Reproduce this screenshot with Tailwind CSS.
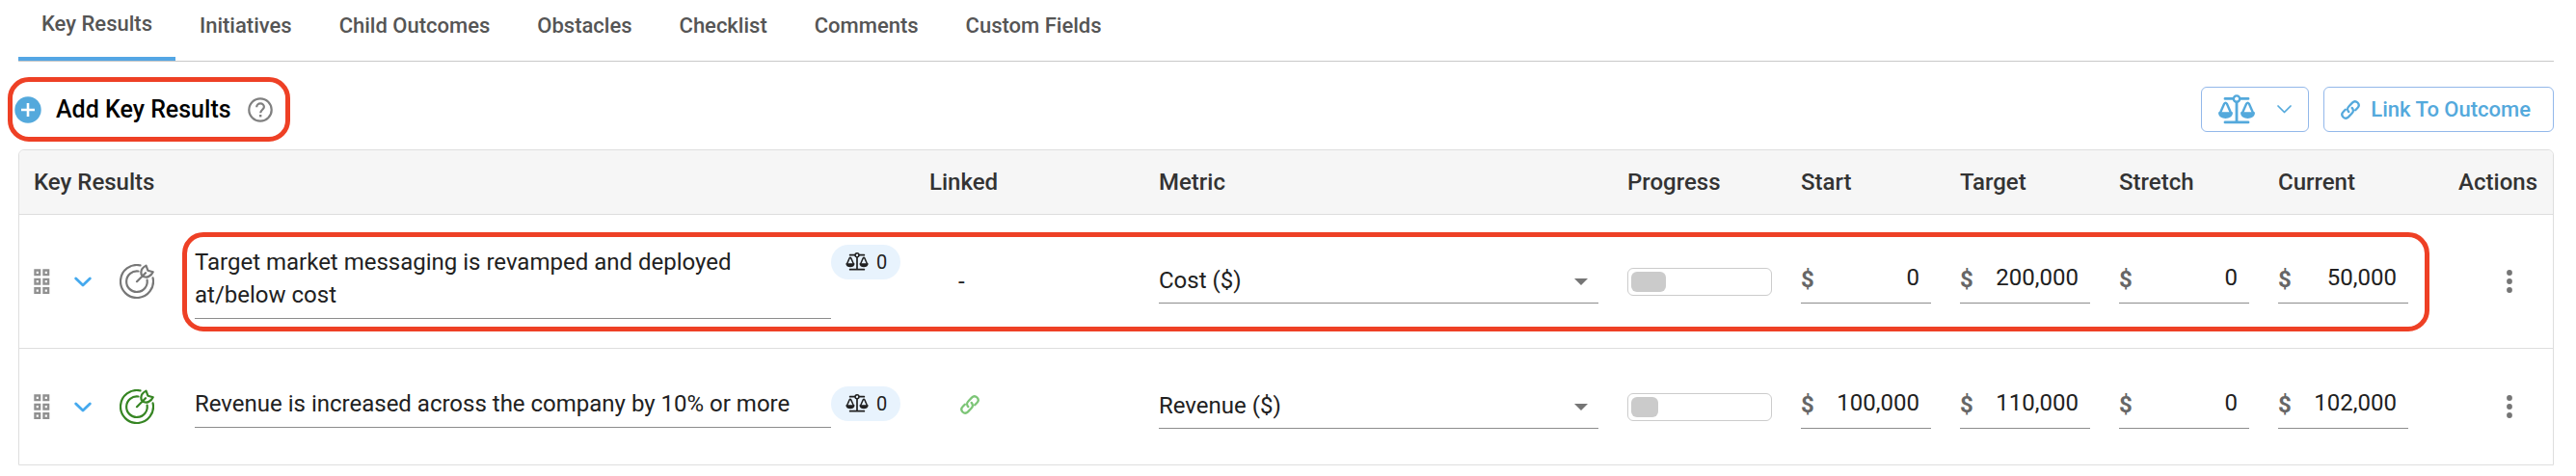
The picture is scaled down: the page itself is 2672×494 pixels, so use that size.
<!DOCTYPE html>
<html lang="en">
<head>
    <meta charset="UTF-8">
    <meta name="viewport" content="width=device-width, initial-scale=1.0">
    <title>Key Results</title>
    <script src="https://cdn.jsdelivr.net/npm/@tailwindcss/browser@4"></script>
</head>
<body class="bg-white font-['Roboto',sans-serif] text-[#212121]">
    <!-- Icons -->
    <svg class="hidden" aria-hidden="true">
        <symbol id="icon-scale" viewBox="0 0 38 31">
            <g fill="none" stroke="currentColor" stroke-linecap="round" stroke-linejoin="round">
                <path stroke-width="2.8" d="M7 4.4h8M23 4.4h8M19 8.5v20M7 28.9h24"/>
                <circle cx="19" cy="4.6" r="3.2" stroke-width="2.4"/>
                <path stroke-width="2.4" d="M1.8 19.5 6.2 9.6Q7.5 7.6 8.8 9.6L13.2 19.5M24.8 19.5 29.2 9.6Q30.5 7.6 31.8 9.6L36.2 19.5"/>
            </g>
            <path fill="currentColor" d="M.3 18.3h14.4c1 4-3 6.6-7.2 6.6S-.7 22.3.3 18.3zM23.3 18.3h14.4c1 4-3 6.6-7.2 6.6s-8.2-2.6-7.2-6.6z"/>
        </symbol>
        <symbol id="icon-link" viewBox="0 0 20 20">
            <g fill="none" stroke="currentColor" stroke-width="2.3" stroke-linecap="round">
                <path d="M8.3 12.1C6.7 10.5 6.7 8.1 8.3 6.5L12 2.6C13.6 1 15.9 1 17.5 2.5C19 4.1 19 6.4 17.4 8L15.2 10.3"/>
                <path d="M11.7 7.9C13.3 9.5 13.3 11.9 11.7 13.5L8 17.4C6.4 19 4.1 19 2.5 17.5C1 15.9 1 13.6 2.6 12L4.8 9.7"/>
            </g>
        </symbol>
        <symbol id="icon-target" viewBox="0 0 36 36">
            <g fill="none" stroke="currentColor" stroke-width="2.2" stroke-linecap="round" stroke-linejoin="round">
                <path d="M21.5 1.4A17 17 0 1 0 34.6 14.4"/>
                <path d="M19.5 7.5A10.8 10.8 0 1 0 28.6 16.5"/>
                <path d="M18 18.2 27 9.2M23.4 12.6C21.4 8.5 22.5 4.3 27.5 1.6L29.4 6.7 34.7 8.3C32.5 13.3 28 14.8 23.4 12.6z"/>
            </g>
        </symbol>
        <symbol id="icon-drag" viewBox="0 0 17 27">
            <g fill="none" stroke="currentColor" stroke-width="2.4">
                <path d="M1.5 1.5h4.6v4.6H1.5zM10.5 1.5h4.6v4.6h-4.6zM1.5 10.9h4.6v4.6H1.5zM10.5 10.9h4.6v4.6h-4.6zM1.5 20.3h4.6v4.6H1.5zM10.5 20.3h4.6v4.6h-4.6z"/>
            </g>
        </symbol>
        <symbol id="icon-chevron" viewBox="0 0 18 11">
            <path fill="none" stroke="currentColor" stroke-width="2.8" stroke-linecap="round" stroke-linejoin="round" d="M1.7 1.9 9 9l7.3-7.1"/>
        </symbol>
        <symbol id="icon-caret" viewBox="0 0 14 7">
            <path fill="currentColor" d="M0 0h14L7 7z"/>
        </symbol>
        <symbol id="icon-dots" viewBox="0 0 6 24">
            <g fill="currentColor"><circle cx="3" cy="3" r="2.9"/><circle cx="3" cy="12" r="2.9"/><circle cx="3" cy="21" r="2.9"/></g>
        </symbol>
    </svg>

    <!-- Tabs -->
    <nav class="ml-[19px] mr-[23px] flex gap-px border-b border-[#c8c8c8] text-[22px] leading-6 font-medium text-[#555]">
        <a href="#" aria-current="page" class="flex h-[63px] items-center border-b-4 border-[#54a6e4] px-6 pb-[9px]">Key Results</a>
        <a href="#" class="flex h-[63px] items-center px-6 pb-[9px]">Initiatives</a>
        <a href="#" class="flex h-[63px] items-center px-6 pb-[9px]">Child Outcomes</a>
        <a href="#" class="flex h-[63px] items-center px-6 pb-[9px]">Obstacles</a>
        <a href="#" class="flex h-[63px] items-center px-6 pb-[9px]">Checklist</a>
        <a href="#" class="flex h-[63px] items-center px-6 pb-[9px]">Comments</a>
        <a href="#" class="flex h-[63px] items-center px-6 pb-[9px]">Custom Fields</a>
    </nav>

    <main>
        <!-- Toolbar -->
        <div class="mt-4 mb-2 ml-2 mr-[23px] flex items-center justify-between">
            <div class="flex h-[67px] items-center rounded-[22px] border-5 border-[#ee4025] pl-[2px] pr-[13px]">
                <button type="button" class="flex items-center gap-[15px] text-[25px] leading-8 font-medium text-black">
                    <svg class="size-7" viewBox="0 0 28 28" aria-hidden="true">
                        <circle cx="14" cy="14" r="13.7" fill="#54a9dc"/>
                        <path d="M14 7v14M7 14h14" stroke="#fff" stroke-width="2.6"/>
                    </svg>
                    Add Key Results
                </button>
                <button type="button" aria-label="Help" class="ml-[17px] text-[#808080]">
                    <svg class="size-[26px]" viewBox="0 0 26 26" fill="none" stroke="currentColor" stroke-width="2.2">
                        <circle cx="13" cy="13" r="11.7"/>
                        <path d="M9.2 10.2c0-2.2 1.7-3.8 3.9-3.8s3.8 1.6 3.8 3.6c0 2.6-3.7 3-3.7 6.3"/>
                        <path d="M12 18h2.4v2.4H12z" fill="currentColor" stroke="none"/>
                    </svg>
                </button>
            </div>
            <div class="flex gap-[15px] text-[#54a9dc]">
                <button type="button" aria-label="Weights" class="flex h-[47px] items-center gap-[23px] rounded-md border border-[#93b8ea] px-[17px]">
                    <svg class="h-[31px] w-[38px]"><use href="#icon-scale"/></svg>
                    <svg class="h-[9px] w-[15px]" viewBox="0 0 15 9" fill="none" stroke="currentColor" stroke-width="1.7" stroke-linecap="round" stroke-linejoin="round"><path d="M1 1l6.5 6.5L14 1"/></svg>
                </button>
                <button type="button" class="flex h-[47px] items-center gap-[11px] rounded-md border border-[#93b8ea] pl-[17px] pr-[23px] text-[22px] leading-6 font-medium">
                    <svg class="size-5"><use href="#icon-link"/></svg>
                    Link To Outcome
                </button>
            </div>
        </div>

        <!-- Key results table -->
        <div class="relative ml-[19px] mr-[23px] rounded-t-md border border-[#dedede]">
            <table class="w-full table-fixed border-separate border-spacing-0 text-[24px] leading-[34px]">
                <thead class="text-left text-[#333]">
                    <tr class="h-[67px]">
                        <th scope="col" class="rounded-tl-md border-b border-[#dedede] bg-[#f6f6f6] px-[15px] font-medium">Key Results</th>
                        <th scope="col" class="w-[238px] border-b border-[#dedede] bg-[#f6f6f6] px-[15px] font-medium">Linked</th>
                        <th scope="col" class="w-[486px] border-b border-[#dedede] bg-[#f6f6f6] px-[15px] font-medium">Metric</th>
                        <th scope="col" class="w-[180px] border-b border-[#dedede] bg-[#f6f6f6] px-[15px] font-medium">Progress</th>
                        <th scope="col" class="w-[165px] border-b border-[#dedede] bg-[#f6f6f6] px-[15px] font-medium">Start</th>
                        <th scope="col" class="w-[165px] border-b border-[#dedede] bg-[#f6f6f6] px-[15px] font-medium">Target</th>
                        <th scope="col" class="w-[165px] border-b border-[#dedede] bg-[#f6f6f6] px-[15px] font-medium">Stretch</th>
                        <th scope="col" class="w-[165px] border-b border-[#dedede] bg-[#f6f6f6] px-[15px] font-medium">Current</th>
                        <th scope="col" class="w-[135px] rounded-tr-md border-b border-[#dedede] bg-[#f6f6f6] px-4 text-right font-medium">Actions</th>
                    </tr>
                </thead>
                <tbody>
                    <tr class="h-[139px]">
                        <td class="border-b border-[#dedede] px-[15px]">
                            <div class="flex items-center">
                                <button type="button" aria-label="Reorder" class="text-[#909090]"><svg class="h-[27px] w-[17px]"><use href="#icon-drag"/></svg></button>
                                <button type="button" aria-label="Expand" class="ml-[25px] text-[#45a9ee]"><svg class="h-[11px] w-[18px]"><use href="#icon-chevron"/></svg></button>
                                <svg class="ml-[29px] size-9 shrink-0 text-[#777]"><use href="#icon-target"/></svg>
                                <div class="ml-[42px] flex flex-1 items-start">
                                    <textarea aria-label="Key result" rows="2" class="block flex-1 resize-none overflow-hidden border-b border-[#8c8c8c] pt-px pb-[7px]">Target market messaging is revamped and deployed
at/below cost</textarea>
                                    <button type="button" class="flex h-9 w-[72px] items-center gap-2 rounded-full bg-[#e8f3fd] pl-[15px] text-[20px]">
                                        <svg class="h-[19px] w-6"><use href="#icon-scale"/></svg>0
                                    </button>
                                </div>
                            </div>
                        </td>
                        <td class="border-b border-[#dedede] pl-[45px]">-</td>
                        <td class="border-b border-[#dedede] px-[15px]">
                            <div class="relative">
                                <select aria-label="Metric" class="block h-[45px] w-full appearance-none border-b border-[#8c8c8c] pb-[2px]">
                                    <option>Cost ($)</option>
                                    <option>Revenue ($)</option>
                                </select>
                                <svg class="pointer-events-none absolute right-[11px] top-[19px] h-[7px] w-[14px] text-[#757575]"><use href="#icon-caret"/></svg>
                            </div>
                        </td>
                        <td class="border-b border-[#dedede] px-[15px]">
                            <div class="h-[29px] rounded-md border border-[#ccc] p-[3px]">
                                <div class="h-full rounded-md bg-[#cbcbcb]" style="width: 25%"></div>
                            </div>
                        </td>
                        <td class="border-b border-[#dedede] px-[15px]">
                            <label class="flex items-center border-b border-[#8c8c8c] pb-[7px] pr-3"><span class="pt-1 font-bold text-[#666]">$</span><input type="text" aria-label="Start" value="0" class="w-full min-w-0 text-right"></label>
                        </td>
                        <td class="border-b border-[#dedede] px-[15px]">
                            <label class="flex items-center border-b border-[#8c8c8c] pb-[7px] pr-3"><span class="pt-1 font-bold text-[#666]">$</span><input type="text" aria-label="Target" value="200,000" class="w-full min-w-0 text-right"></label>
                        </td>
                        <td class="border-b border-[#dedede] px-[15px]">
                            <label class="flex items-center border-b border-[#8c8c8c] pb-[7px] pr-3"><span class="pt-1 font-bold text-[#666]">$</span><input type="text" aria-label="Stretch" value="0" class="w-full min-w-0 text-right"></label>
                        </td>
                        <td class="border-b border-[#dedede] px-[15px]">
                            <label class="flex items-center border-b border-[#8c8c8c] pb-[7px] pr-3"><span class="pt-1 font-bold text-[#666]">$</span><input type="text" aria-label="Current" value="50,000" class="w-full min-w-0 text-right"></label>
                        </td>
                        <td class="border-b border-[#dedede] pr-8">
                            <button type="button" aria-label="More actions" class="ml-auto block px-[10px] text-[#757575]"><svg class="h-6 w-[6px]"><use href="#icon-dots"/></svg></button>
                        </td>
                    </tr>
                    <tr class="h-[120px]">
                        <td class="px-[15px]">
                            <div class="flex items-center">
                                <button type="button" aria-label="Reorder" class="text-[#909090]"><svg class="h-[27px] w-[17px]"><use href="#icon-drag"/></svg></button>
                                <button type="button" aria-label="Expand" class="ml-[25px] text-[#45a9ee]"><svg class="h-[11px] w-[18px]"><use href="#icon-chevron"/></svg></button>
                                <svg class="ml-[29px] size-9 shrink-0 text-[#368523]"><use href="#icon-target"/></svg>
                                <div class="ml-[42px] flex flex-1 items-start">
                                    <textarea aria-label="Key result" rows="1" class="block flex-1 resize-none overflow-hidden border-b border-[#8c8c8c] pt-px pb-[7px]">Revenue is increased across the company by 10% or more</textarea>
                                    <button type="button" class="flex h-9 w-[72px] items-center gap-2 rounded-full bg-[#e8f3fd] pl-[15px] text-[20px]">
                                        <svg class="h-[19px] w-6"><use href="#icon-scale"/></svg>0
                                    </button>
                                </div>
                            </div>
                        </td>
                        <td class="pl-[47px]">
                            <a href="#" aria-label="Linked outcome" class="block w-5 pb-1 text-[#7cc576]"><svg class="size-5"><use href="#icon-link"/></svg></a>
                        </td>
                        <td class="px-[15px]">
                            <div class="relative">
                                <select aria-label="Metric" class="block h-[45px] w-full appearance-none border-b border-[#8c8c8c] pb-[2px]">
                                    <option>Revenue ($)</option>
                                    <option>Cost ($)</option>
                                </select>
                                <svg class="pointer-events-none absolute right-[11px] top-[19px] h-[7px] w-[14px] text-[#757575]"><use href="#icon-caret"/></svg>
                            </div>
                        </td>
                        <td class="px-[15px]">
                            <div class="h-[29px] rounded-md border border-[#ccc] p-[3px]">
                                <div class="h-full rounded-md bg-[#cbcbcb]" style="width: 20%"></div>
                            </div>
                        </td>
                        <td class="px-[15px]">
                            <label class="flex items-center border-b border-[#8c8c8c] pb-[7px] pr-3"><span class="pt-1 font-bold text-[#666]">$</span><input type="text" aria-label="Start" value="100,000" class="w-full min-w-0 text-right"></label>
                        </td>
                        <td class="px-[15px]">
                            <label class="flex items-center border-b border-[#8c8c8c] pb-[7px] pr-3"><span class="pt-1 font-bold text-[#666]">$</span><input type="text" aria-label="Target" value="110,000" class="w-full min-w-0 text-right"></label>
                        </td>
                        <td class="px-[15px]">
                            <label class="flex items-center border-b border-[#8c8c8c] pb-[7px] pr-3"><span class="pt-1 font-bold text-[#666]">$</span><input type="text" aria-label="Stretch" value="0" class="w-full min-w-0 text-right"></label>
                        </td>
                        <td class="px-[15px]">
                            <label class="flex items-center border-b border-[#8c8c8c] pb-[7px] pr-3"><span class="pt-1 font-bold text-[#666]">$</span><input type="text" aria-label="Current" value="102,000" class="w-full min-w-0 text-right"></label>
                        </td>
                        <td class="pr-8">
                            <button type="button" aria-label="More actions" class="ml-auto block px-[10px] text-[#757575]"><svg class="h-6 w-[6px]"><use href="#icon-dots"/></svg></button>
                        </td>
                    </tr>
                </tbody>
            </table>

            <!-- Highlight around the first key result -->
            <div class="pointer-events-none absolute left-[169px] right-[128px] top-[85px] h-[103px] rounded-[22px] border-5 border-[#ee4025]"></div>
        </div>
    </main>
</body>
</html>
